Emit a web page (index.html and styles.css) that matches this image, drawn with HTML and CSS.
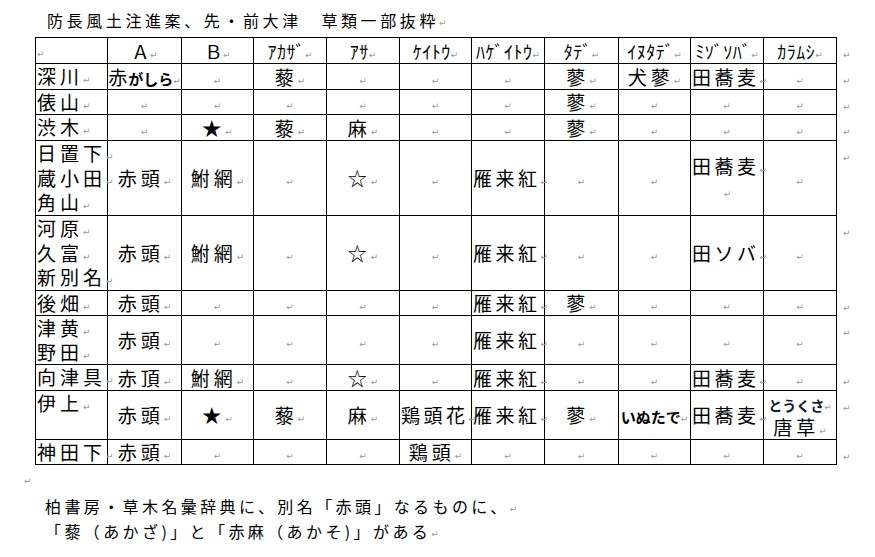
FILE: index.html
```html
<!DOCTYPE html>
<html lang="ja">
<head>
<meta charset="utf-8">
<title>防長風土注進案 草類一部抜粋</title>
<link rel="stylesheet" href="styles.css">
</head>
<body>
<div class="page">
  <p class="title">防長風土注進案、先・前大津　草類一部抜粋<span class="m">↵</span></p>
  <table class="grid">
    <colgroup>
      <col class="c72"><col class="c74"><col class="c72"><col class="c73"><col class="c73"><col class="c72"><col class="c73"><col class="c74"><col class="c72"><col class="c73"><col class="c73"><col class="ce">
    </colgroup>
    <tr class="r26 hd">
      <td class="name"><span class="m">↵</span></td>
      <td>Ａ<span class="m">↵</span></td>
      <td>Ｂ<span class="m">↵</span></td>
      <td>ｱｶｻﾞ<span class="m">↵</span></td>
      <td>ｱｻ<span class="m">↵</span></td>
      <td>ｹｲﾄｳ<span class="m">↵</span></td>
      <td>ﾊｹﾞｲﾄｳ<span class="m">↵</span></td>
      <td>ﾀﾃﾞ<span class="m">↵</span></td>
      <td>ｲﾇﾀﾃﾞ<span class="m">↵</span></td>
      <td>ﾐｿﾞｿﾊﾞ<span class="m">↵</span></td>
      <td>ｶﾗﾑｼ<span class="m">↵</span></td>
      <td class="eor"><span class="m">↵</span></td>
    </tr>
    <tr class="r26">
      <td class="name">深川<span class="m">↵</span></td>
      <td><span class="tight">赤</span><span class="kana">がしら</span><span class="m">↵</span></td>
      <td><span class="m">↵</span></td>
      <td>藜<span class="m">↵</span></td>
      <td><span class="m">↵</span></td>
      <td><span class="m">↵</span></td>
      <td><span class="m">↵</span></td>
      <td>蓼<span class="m">↵</span></td>
      <td>犬蓼<span class="m">↵</span></td>
      <td class="full">田蕎麦<span class="m">↵</span></td>
      <td><span class="m">↵</span></td>
      <td class="eor"><span class="m">↵</span></td>
    </tr>
    <tr class="r25">
      <td class="name">俵山<span class="m">↵</span></td>
      <td><span class="m">↵</span></td>
      <td><span class="m">↵</span></td>
      <td><span class="m">↵</span></td>
      <td><span class="m">↵</span></td>
      <td><span class="m">↵</span></td>
      <td><span class="m">↵</span></td>
      <td>蓼<span class="m">↵</span></td>
      <td><span class="m">↵</span></td>
      <td><span class="m">↵</span></td>
      <td><span class="m">↵</span></td>
      <td class="eor"><span class="m">↵</span></td>
    </tr>
    <tr class="r26">
      <td class="name">渋木<span class="m">↵</span></td>
      <td><span class="m">↵</span></td>
      <td>★<span class="m">↵</span></td>
      <td>藜<span class="m">↵</span></td>
      <td>麻<span class="m">↵</span></td>
      <td><span class="m">↵</span></td>
      <td><span class="m">↵</span></td>
      <td>蓼<span class="m">↵</span></td>
      <td><span class="m">↵</span></td>
      <td><span class="m">↵</span></td>
      <td><span class="m">↵</span></td>
      <td class="eor"><span class="m">↵</span></td>
    </tr>
    <tr class="r75">
      <td class="name">日置下<span class="m">↵</span><br>蔵小田<span class="m">↵</span><br>角山<span class="m">↵</span></td>
      <td>赤頭<span class="m">↵</span></td>
      <td>鮒網<span class="m">↵</span></td>
      <td><span class="m">↵</span></td>
      <td>☆<span class="m">↵</span></td>
      <td><span class="m">↵</span></td>
      <td class="full">雁来紅<span class="m">↵</span></td>
      <td><span class="m">↵</span></td>
      <td><span class="m">↵</span></td>
      <td class="full">田蕎麦<span class="m">↵</span><br><span class="m">↵</span></td>
      <td><span class="m">↵</span></td>
      <td class="eor"><span class="m">↵</span></td>
    </tr>
    <tr class="r75">
      <td class="name">河原<span class="m">↵</span><br>久富<span class="m">↵</span><br>新別名<span class="m">↵</span></td>
      <td>赤頭<span class="m">↵</span></td>
      <td>鮒網<span class="m">↵</span></td>
      <td><span class="m">↵</span></td>
      <td>☆<span class="m">↵</span></td>
      <td><span class="m">↵</span></td>
      <td class="full">雁来紅<span class="m">↵</span></td>
      <td><span class="m">↵</span></td>
      <td><span class="m">↵</span></td>
      <td class="full">田ソバ<span class="m">↵</span></td>
      <td><span class="m">↵</span></td>
      <td class="eor"><span class="m">↵</span></td>
    </tr>
    <tr class="r25">
      <td class="name">後畑<span class="m">↵</span></td>
      <td>赤頭<span class="m">↵</span></td>
      <td><span class="m">↵</span></td>
      <td><span class="m">↵</span></td>
      <td><span class="m">↵</span></td>
      <td><span class="m">↵</span></td>
      <td class="full">雁来紅<span class="m">↵</span></td>
      <td>蓼<span class="m">↵</span></td>
      <td><span class="m">↵</span></td>
      <td><span class="m">↵</span></td>
      <td><span class="m">↵</span></td>
      <td class="eor"><span class="m">↵</span></td>
    </tr>
    <tr class="r49">
      <td class="name">津黄<span class="m">↵</span><br>野田<span class="m">↵</span></td>
      <td>赤頭<span class="m">↵</span></td>
      <td><span class="m">↵</span></td>
      <td><span class="m">↵</span></td>
      <td><span class="m">↵</span></td>
      <td><span class="m">↵</span></td>
      <td class="full">雁来紅<span class="m">↵</span></td>
      <td><span class="m">↵</span></td>
      <td><span class="m">↵</span></td>
      <td><span class="m">↵</span></td>
      <td><span class="m">↵</span></td>
      <td class="eor"><span class="m">↵</span></td>
    </tr>
    <tr class="r26">
      <td class="name">向津具<span class="m">↵</span></td>
      <td>赤頂<span class="m">↵</span></td>
      <td>鮒網<span class="m">↵</span></td>
      <td><span class="m">↵</span></td>
      <td>☆<span class="m">↵</span></td>
      <td><span class="m">↵</span></td>
      <td class="full">雁来紅<span class="m">↵</span></td>
      <td><span class="m">↵</span></td>
      <td><span class="m">↵</span></td>
      <td class="full">田蕎麦<span class="m">↵</span></td>
      <td><span class="m">↵</span></td>
      <td class="eor"><span class="m">↵</span></td>
    </tr>
    <tr class="r49">
      <td class="name">伊上<span class="m">↵</span></td>
      <td>赤頭<span class="m">↵</span></td>
      <td>★<span class="m">↵</span></td>
      <td>藜<span class="m">↵</span></td>
      <td>麻<span class="m">↵</span></td>
      <td class="full">鶏頭花<span class="m">↵</span></td>
      <td class="full">雁来紅<span class="m">↵</span></td>
      <td>蓼<span class="m">↵</span></td>
      <td><span class="kana">いぬたで</span><span class="m">↵</span></td>
      <td class="full">田蕎麦<span class="m">↵</span></td>
      <td><span class="ruby">とうくさ</span><span class="m">↵</span><br>唐草<span class="m">↵</span></td>
      <td class="eor"><span class="m">↵</span></td>
    </tr>
    <tr class="r25">
      <td class="name">神田下<span class="m">↵</span></td>
      <td>赤頭<span class="m">↵</span></td>
      <td><span class="m">↵</span></td>
      <td><span class="m">↵</span></td>
      <td><span class="m">↵</span></td>
      <td>鶏頭<span class="m">↵</span></td>
      <td><span class="m">↵</span></td>
      <td><span class="m">↵</span></td>
      <td><span class="m">↵</span></td>
      <td><span class="m">↵</span></td>
      <td><span class="m">↵</span></td>
      <td class="eor"><span class="m">↵</span></td>
    </tr>
  </table>
  <p class="blank"><span class="m">↵</span></p>
  <p class="note">柏書房・草木名彙辞典に、別名「赤頭」なるものに、<span class="m">↵</span></p>
  <p class="note">「藜（あかざ)」と「赤麻（あかそ)」がある<span class="m">↵</span></p>
</div>
</body>
</html>
```

FILE: styles.css
```css
* { box-sizing: border-box; }
html, body { margin: 0; padding: 0; background: #fff; }
body {
  font-family: "Noto Sans CJK JP", sans-serif;
  color: #000;
  width: 875px;
  height: 557px;
  overflow: hidden;
}
.page { padding-top: 8px; }
.title {
  margin: 0 0 5px 47px;
  height: 24px;
  font-size: 16px;
  line-height: 24px;
  letter-spacing: 3.6px;
  white-space: nowrap;
}
.grid {
  margin-left: 35px;
  border-collapse: collapse;
  table-layout: fixed;
  width: 822px;
}
.c72 { width: 72px; }
.c73 { width: 73px; }
.c74 { width: 74px; }
.ce { width: 21px; }
.grid td {
  border: 1px solid #000;
  padding: 0;
  text-align: center;
  vertical-align: middle;
  font-size: 19px;
  line-height: 22px;
  letter-spacing: 4px;
  white-space: nowrap;
  overflow: visible;
}
.grid td.full { letter-spacing: 3.5px; padding-left: 1px; }
.grid td.name {
  text-align: left;
  vertical-align: top;
  padding-left: 1px;
}
.grid td.eor {
  border: none;
  text-align: left;
  vertical-align: top;
  padding-left: 6px;
  padding-top: 2px;
}
.r25 td { height: 25px; }
.r26 td { height: 26px; }
.r49 td { height: 49px; }
.r75 td { height: 75px; }
.r75 td.name { line-height: 24.5px; }
.r75 td.full { line-height: 24.5px; }
.r49 td.name { line-height: 24px; }
.r25 td.name, .r26 td.name { line-height: 24px; }
.hd td { font-size: 18px; letter-spacing: 0.5px; }
.tight { letter-spacing: 1px; }
.kana { font-size: 15px; font-weight: 700; letter-spacing: 0; line-height: 0; }
.ruby { font-size: 14px; font-weight: 700; letter-spacing: 0; color: #0c1a3a; }
.m {
  font-family: "DejaVu Sans", sans-serif;
  font-size: 9px;
  font-weight: 400;
  line-height: 0;
  color: #9a9a9a;
  letter-spacing: 0;
  vertical-align: 1px;
}
.blank {
  margin: 9px 0 0 24px;
  height: 20px;
  line-height: 20px;
}
.blank .m { vertical-align: 7px; }
.note {
  margin: 0 0 0 45px;
  height: 25px;
  font-size: 16px;
  line-height: 25px;
  letter-spacing: 3.4px;
  white-space: nowrap;
}
```
